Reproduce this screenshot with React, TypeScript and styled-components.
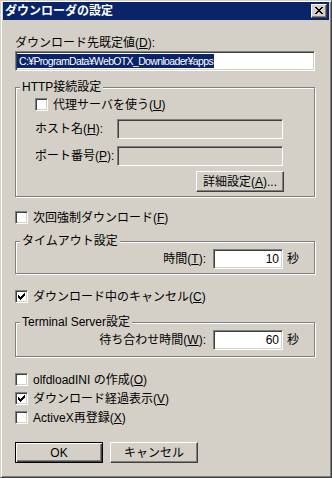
import React from 'react';
import styled, { createGlobalStyle, css } from 'styled-components';

const GlobalStyle = createGlobalStyle`
  html, body { margin: 0; padding: 0; background: #d4d0c8; }
  body {
    font-family: "Liberation Sans", "Noto Sans CJK JP", sans-serif;
    font-size: 12px;
    color: #000;
  }
`;

const sunken = css`
  box-sizing: border-box;
  border: 1px solid;
  border-color: #808080 #fff #fff #808080;
  box-shadow: inset 1px 1px 0 #404040, inset -1px -1px 0 #d4d0c8;
`;

const Frame = styled.div`
  box-sizing: border-box;
  width: 332px;
  height: 478px;
  padding: 1px 2px 2px 2px;
  background: #d4d0c8;
  border: 1px solid;
  border-color: #d4d0c8 #404040 #404040 #d4d0c8;
  box-shadow: inset 1px 1px 0 #fff, inset -1px -1px 0 #808080;
  display: flex;
  flex-direction: column;
`;

const TitleBar = styled.div`
  height: 18px;
  padding: 0 2px;
  background: #0a246a;
  color: #fff;
  display: flex;
  align-items: center;
  justify-content: space-between;
`;

const TitleText = styled.span`
  font-weight: bold;
  line-height: 18px;
`;

const CloseButton = styled.div`
  box-sizing: border-box;
  width: 16px;
  height: 14px;
  background: #d4d0c8;
  border: 1px solid;
  border-color: #fff #404040 #404040 #fff;
  box-shadow: inset -1px -1px 0 #808080;
  display: flex;
  align-items: flex-start;
  padding: 2px 0 0 3px;
`;

const Body = styled.div`
  display: flex;
  flex-direction: column;
  padding: 0 14px 0 12px;
`;

const Label = styled.div<{ $top?: number }>`
  line-height: 14px;
  white-space: nowrap;
  margin-top: ${p => p.$top ?? 0}px;
`;

const Key = styled.span`
  text-decoration: underline;
`;

const TextBox = styled.div<{ $width?: number; $disabled?: boolean; $right?: boolean; $top?: number }>`
  ${sunken};
  width: ${p => (p.$width ? `${p.$width}px` : '100%')};
  height: 20px;
  margin-top: ${p => p.$top ?? 0}px;
  padding: 0 ${p => (p.$right ? 3 : 1)}px 0 1px;
  background: ${p => (p.$disabled ? '#d4d0c8' : '#fff')};
  display: flex;
  align-items: center;
  justify-content: ${p => (p.$right ? 'flex-end' : 'flex-start')};
  line-height: 14px;
  white-space: nowrap;
  flex-shrink: 0;
`;

const Selected = styled.span`
  background: #0a246a;
  color: #fff;
  padding: 0 1px 0 2px;
  font-size: 10.5px;
  letter-spacing: -0.65px;
`;

const Group = styled.div<{ $top: number; $bottom: number; $left?: number }>`
  display: flex;
  flex-direction: column;
  margin-top: ${p => p.$top}px;
  padding: 0 15px ${p => p.$bottom}px ${p => p.$left ?? 0}px;
  border: 1px solid #808080;
  box-shadow: inset 1px 1px 0 #fff, 1px 1px 0 #fff;
`;

const Caption = styled.div<{ $indent: number }>`
  align-self: flex-start;
  margin: -8px 0 0 ${p => p.$indent}px;
  padding: 0 2px;
  line-height: 15px;
  background: #d4d0c8;
  white-space: nowrap;
`;

const CheckRow = styled.div<{ $top: number }>`
  display: flex;
  align-items: center;
  height: 13px;
  margin-top: ${p => p.$top}px;
  line-height: 14px;
  white-space: nowrap;
`;

const Box = styled.span`
  ${sunken};
  width: 13px;
  height: 13px;
  flex-shrink: 0;
  margin-right: 5px;
  background: #fff;
  display: flex;
`;

const FieldRow = styled.div<{ $top: number }>`
  display: flex;
  align-items: center;
  margin-top: ${p => p.$top}px;
`;

const FieldLabel = styled.span`
  width: 82px;
  line-height: 14px;
  white-space: nowrap;
`;

const ValueRow = styled.div`
  display: flex;
  align-items: center;
  justify-content: flex-end;
`;

const ValueLabel = styled.span`
  line-height: 14px;
  margin-right: 7px;
  white-space: nowrap;
`;

const Unit = styled.span`
  line-height: 14px;
  margin-left: 4px;
`;

const ButtonRow = styled.div<{ $top: number; $right?: number }>`
  display: flex;
  gap: 7px;
  margin-top: ${p => p.$top}px;
  margin-right: ${p => p.$right ?? 0}px;
  justify-content: ${p => (p.$right ? 'flex-end' : 'flex-start')};
`;

const Button = styled.div<{ $default?: boolean }>`
  box-sizing: border-box;
  width: 88px;
  height: 21px;
  background: #d4d0c8;
  display: flex;
  align-items: center;
  justify-content: center;
  line-height: 14px;
  white-space: nowrap;
  border: 1px solid;
  border-color: #fff #404040 #404040 #fff;
  box-shadow: inset -1px -1px 0 #808080;
  ${p =>
    p.$default &&
    css`
      border-color: #000;
      box-shadow: inset 1px 1px 0 #fff, inset -1px -1px 0 #404040, inset -2px -2px 0 #808080;
    `}
`;

const CloseGlyph = () => (
  <svg width="8" height="7" viewBox="0 0 8 7" shapeRendering="crispEdges">
    {[0, 1, 2, 3, 4, 5, 6].map(r => {
      const d = Math.min(r, 6 - r);
      return (
        <g key={r} fill="#000">
          <rect x={d} y={r} width="2" height="1" />
          <rect x={6 - d} y={r} width="2" height="1" />
        </g>
      );
    })}
  </svg>
);

const CheckMark = () => (
  <svg width="11" height="11" viewBox="1 1 11 11" shapeRendering="crispEdges">
    {[
      [3, 5],
      [4, 6],
      [5, 7],
      [6, 6],
      [7, 5],
      [8, 4],
      [9, 3],
    ].map(([x, y]) => (
      <rect key={x} x={x} y={y} width="1" height="3" fill="#000" />
    ))}
  </svg>
);

const Check = ({ checked, top, children }: { checked?: boolean; top: number; children: React.ReactNode }) => (
  <CheckRow $top={top}>
    <Box>{checked && <CheckMark />}</Box>
    <span>{children}</span>
  </CheckRow>
);

export default function App() {
  return (
    <>
      <GlobalStyle />
      <Frame>
        <TitleBar>
          <TitleText>ダウンローダの設定</TitleText>
          <CloseButton>
            <CloseGlyph />
          </CloseButton>
        </TitleBar>
        <Body>
          <Label $top={16}>
            ダウンロード先既定値(<Key>D</Key>):
          </Label>
          <TextBox $top={1}>
            <Selected>C:¥ProgramData¥WebOTX_Downloader¥apps</Selected>
          </TextBox>

          <Group $top={16} $bottom={4} $left={19}>
            <Caption $indent={-15}>HTTP接続設定</Caption>
            <Check top={3}>
              代理サーバを使う(<Key>U</Key>)
            </Check>
            <FieldRow $top={8}>
              <FieldLabel>
                ホスト名(<Key>H</Key>):
              </FieldLabel>
              <TextBox $width={166} $disabled />
            </FieldRow>
            <FieldRow $top={7}>
              <FieldLabel>
                ポート番号(<Key>P</Key>):
              </FieldLabel>
              <TextBox $width={166} $disabled />
            </FieldRow>
            <ButtonRow $top={5} $right={15}>
              <Button>
                詳細設定(<Key>A</Key>)...
              </Button>
            </ButtonRow>
          </Group>

          <Check top={14}>
            次回強制ダウンロード(<Key>F</Key>)
          </Check>

          <Group $top={17} $bottom={4}>
            <Caption $indent={4}>タイムアウト設定</Caption>
            <ValueRow>
              <ValueLabel>
                時間(<Key>T</Key>):
              </ValueLabel>
              <TextBox $width={70} $right>
                10
              </TextBox>
              <Unit>秒</Unit>
            </ValueRow>
          </Group>

          <Check top={16} checked>
            ダウンロード中のキャンセル(<Key>C</Key>)
          </Check>

          <Group $top={19} $bottom={6}>
            <Caption $indent={4}>Terminal Server設定</Caption>
            <ValueRow>
              <ValueLabel>
                待ち合わせ時間(<Key>W</Key>):
              </ValueLabel>
              <TextBox $width={70} $right>
                60
              </TextBox>
              <Unit>秒</Unit>
            </ValueRow>
          </Group>

          <Check top={16}>
            olfdloadINI の作成(<Key>O</Key>)
          </Check>
          <Check top={6} checked>
            ダウンロード経過表示(<Key>V</Key>)
          </Check>
          <Check top={6}>
            ActiveX再登録(<Key>X</Key>)
          </Check>

          <ButtonRow $top={18}>
            <Button $default>OK</Button>
            <Button>キャンセル</Button>
          </ButtonRow>
        </Body>
      </Frame>
    </>
  );
}
